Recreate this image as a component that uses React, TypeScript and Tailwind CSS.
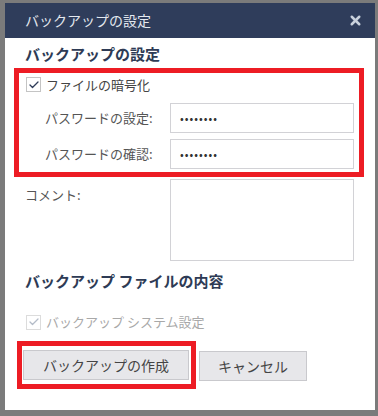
import { Check, X } from 'lucide-react';

function CheckBox({ disabled }: { disabled?: boolean }) {
  return (
    <span
      className={`flex h-[15px] w-[15px] shrink-0 items-center justify-center border bg-white ${
        disabled ? 'border-[#dcdcdc]' : 'border-[#c4c4c4]'
      }`}
    >
      <Check size={12} strokeWidth={2.6} className={disabled ? 'text-[#b4bcc8]' : 'text-[#2e3b58]'} />
    </span>
  );
}

function PasswordRow({ label }: { label: string }) {
  return (
    <div className="flex items-center">
      <span className="w-[151px] shrink-0 whitespace-nowrap pl-[26px] text-[13px] text-[#555]">{label}</span>
      <div className="flex h-[30px] w-[184px] items-center border border-[#d2d2d6] bg-white pl-[9px] text-[11px] tracking-[1px] text-[#333]">
        ••••••••
      </div>
    </div>
  );
}

export default function App() {
  return (
    <div
      className="h-[416px] w-[378px] bg-[#7b7b7b] pl-[5px] pt-[3px]"
      style={{ fontFamily: '"Noto Sans CJK JP", "Noto Sans", sans-serif' }}
    >
      <div className="flex h-[407px] w-[370px] flex-col bg-white">
        {/* Header */}
        <div className="flex h-[35px] items-center justify-between bg-[#2f3d5b] pl-[20px] pr-[12px]">
          <span className="text-[14px] text-[#e3e8ef]">バックアップの設定</span>
          <X size={15} strokeWidth={4} className="text-[#c9d1dc]" />
        </div>

        {/* Content */}
        <div className="flex flex-col pl-[9px] pt-[6px]">
          <h2 className="ml-[11px] text-[15px] font-bold leading-[20px] text-[#2e3b55]">バックアップの設定</h2>

          {/* Encryption (highlighted) */}
          <div className="mt-[4px] flex w-[350px] flex-col border-[5px] border-[#ed1c24] pb-[3px]">
            <div className="mt-[1px] flex h-[20px] items-center gap-[5px] pl-[7px] pt-[1px]">
              <CheckBox />
              <span className="text-[13px] text-[#444]">ファイルの暗号化</span>
            </div>
            <div className="mt-[9px] flex flex-col gap-[6px]">
              <PasswordRow label="パスワードの設定:" />
              <PasswordRow label="パスワードの確認:" />
            </div>
          </div>

          {/* Comment */}
          <div className="mt-[2px] flex">
            <span className="ml-[11px] w-[145px] pt-[6px] text-[13px] leading-[20px] text-[#555]">コメント:</span>
            <div className="h-[82px] w-[184px] border border-[#d2d2d6] bg-white" />
          </div>

          <h2 className="ml-[11px] mt-[10px] text-[15px] font-bold leading-[20px] text-[#2e3b55]">
            バックアップ ファイルの内容
          </h2>

          <div className="ml-[12px] mt-[21px] flex h-[20px] items-center gap-[5px]">
            <CheckBox disabled />
            <span className="text-[13px] text-[#a8a8a8]">バックアップ システム設定</span>
          </div>

          {/* Buttons */}
          <div className="mt-[9px] flex items-start">
            <div className="ml-[3px] h-[48px] w-[179px] border-[5px] border-[#ed1c24] pl-[1px] pt-[4px]">
              <button className="h-[30px] w-[166px] border border-[#c9c9cd] bg-[#e7e7ea] text-[14px] text-[#444]">
                バックアップの作成
              </button>
            </div>
            <button className="ml-[3px] mt-[10px] h-[30px] w-[108px] border border-[#c9c9cd] bg-[#e7e7ea] text-[14px] text-[#444]">
              キャンセル
            </button>
          </div>
        </div>
      </div>
    </div>
  );
}
